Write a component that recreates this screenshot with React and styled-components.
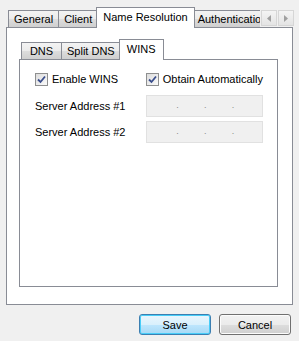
import React from "react";
import styled, { createGlobalStyle } from "styled-components";

const GlobalStyle = createGlobalStyle`
  html, body {
    margin: 0;
    padding: 0;
    background: #f0f0f0;
  }
  body {
    font-family: "Liberation Sans", Arial, sans-serif;
    font-size: 11px;
    color: #000;
  }
`;

const Dialog = styled.div`
  width: 299px;
  height: 341px;
  box-sizing: border-box;
  padding: 7px 6px 0 6px;
  display: flex;
  flex-direction: column;
`;

const TabHeader = styled.div`
  display: flex;
  align-items: flex-start;
  height: 21px;
  position: relative;
  z-index: 1;
`;

const TabStrip = styled.div`
  display: flex;
  align-items: flex-end;
  height: 21px;
  width: ${(p) => p.$width}px;
  overflow: hidden;
  padding-left: ${(p) => p.$inset}px;
  box-sizing: border-box;
  flex-shrink: 0;
`;

const Tab = styled.div`
  box-sizing: border-box;
  height: ${(p) => (p.$active ? 21 : 18)}px;
  min-width: ${(p) => (p.$min || 0) + (p.$active ? 4 : 0)}px;
  text-align: center;
  padding: ${(p) => (p.$active ? "2px 6px 0 6px" : "1px 5px 0 5px")};
  margin: ${(p) => (p.$active ? "0 -2px" : "0")};
  border: 1px solid #898c95;
  border-bottom: ${(p) => (p.$active ? "none" : "1px solid #898c95")};
  border-left: ${(p) => (p.$active || p.$first ? "1px solid #898c95" : "none")};
  background: ${(p) =>
    p.$active ? "#fff" : "linear-gradient(#f3f3f3 0%, #ebebeb 50%, #dddddd 51%, #cfcfcf 100%)"};
  position: relative;
  z-index: ${(p) => (p.$active ? 2 : 1)};
  white-space: nowrap;
  line-height: 15px;
  flex-shrink: 0;
`;

const Scroller = styled.div`
  display: flex;
  gap: 1px;
  margin-top: 3px;
  margin-left: 1px;
`;

const ScrollBtn = styled.div`
  width: 14px;
  height: 14px;
  border: 1px solid #d6d6d6;
  background: linear-gradient(#f4f4f4, #e4e4e4);
  display: flex;
  align-items: center;
  justify-content: center;
`;

const Panel = styled.div`
  box-sizing: border-box;
  border: 1px solid #898c95;
  background: #fff;
  margin-top: -1px;
  height: ${(p) => p.$height}px;
  width: ${(p) => p.$width}px;
  padding: ${(p) => p.$pad};
  display: flex;
  flex-direction: column;
`;

const Form = styled.div`
  display: grid;
  grid-template-columns: 111px 117px;
  grid-template-rows: 24px 22px 22px;
  row-gap: 4px;
  align-items: center;
  padding: 7px 0 0 15px;
`;

const CheckLabel = styled.label`
  display: flex;
  align-items: center;
  gap: 4px;
  white-space: nowrap;
`;

const Box = styled.span`
  width: 13px;
  height: 13px;
  box-sizing: border-box;
  border: 1px solid #8e8f8f;
  background: linear-gradient(135deg, #dcdcdc, #fbfbfb);
  display: inline-flex;
  align-items: center;
  justify-content: center;
`;

const FieldLabel = styled.span`
  white-space: nowrap;
`;

const IpBox = styled.div`
  box-sizing: border-box;
  width: 117px;
  height: 22px;
  border: 1px solid #e1e1e1;
  background: #f0f0f0;
  display: grid;
  grid-template-columns: repeat(4, 1fr);
  padding-left: 4px;
  color: #8a8a8a;
  font-size: 9px;
  line-height: 19px;
`;

const Dot = styled.span`
  text-align: right;
`;

const Buttons = styled.div`
  display: flex;
  justify-content: flex-end;
  gap: 8px;
  margin-top: 9px;
  padding-right: 2px;
`;

const Button = styled.button`
  font: inherit;
  width: 72px;
  height: 21px;
  border-radius: 3px;
  color: #000;
  padding: 0;
  border: 1px solid ${(p) => (p.$default ? "#3c7fb1" : "#707070")};
  background: ${(p) =>
    p.$default
      ? "linear-gradient(#eaf6fd 0%, #d9f0fc 50%, #bee6fd 51%, #a7d9f5 100%)"
      : "linear-gradient(#f2f2f2 0%, #ebebeb 50%, #dddddd 51%, #cfcfcf 100%)"};
  box-shadow: ${(p) => (p.$default ? "inset 0 0 0 1px #48cdf8" : "inset 0 0 0 1px #fcfcfc")};
`;

const Check = () => (
  <svg width="9" height="9" viewBox="0 0 9 9">
    <path d="M1 4.5 L3.5 7 L8 1.5" fill="none" stroke="#3a4e8c" strokeWidth="1.8" />
  </svg>
);

const Arrow = ({ dir }) => (
  <svg width="4" height="7" viewBox="0 0 4 7">
    <path d={dir === "left" ? "M4 0 L0 3.5 L4 7 Z" : "M0 0 L4 3.5 L0 7 Z"} fill="#a0a0a0" />
  </svg>
);

const IpField = () => (
  <IpBox>
    <Dot>.</Dot>
    <Dot>.</Dot>
    <Dot>.</Dot>
    <span />
  </IpBox>
);

export default function App() {
  return (
    <>
      <GlobalStyle />
      <Dialog>
        <TabHeader>
          <TabStrip $width={254} $inset={2}>
            <Tab $first>General</Tab>
            <Tab>Client</Tab>
            <Tab $active>Name Resolution</Tab>
            <Tab>Authentication</Tab>
          </TabStrip>
          <Scroller>
            <ScrollBtn>
              <Arrow dir="left" />
            </ScrollBtn>
            <ScrollBtn>
              <Arrow dir="right" />
            </ScrollBtn>
          </Scroller>
        </TabHeader>
        <Panel $height={278} $width={287} $pad="11px 0 0 12px">
          <TabHeader>
            <TabStrip $width={200} $inset={2}>
              <Tab $first $min={41}>DNS</Tab>
              <Tab $min={41}>Split DNS</Tab>
              <Tab $active $min={41}>WINS</Tab>
            </TabStrip>
          </TabHeader>
          <Panel $height={228} $width={259} $pad="0">
            <Form>
              <CheckLabel>
                <Box>
                  <Check />
                </Box>
                Enable WINS
              </CheckLabel>
              <CheckLabel>
                <Box>
                  <Check />
                </Box>
                Obtain Automatically
              </CheckLabel>
              <FieldLabel>Server Address #1</FieldLabel>
              <IpField />
              <FieldLabel>Server Address #2</FieldLabel>
              <IpField />
            </Form>
          </Panel>
        </Panel>
        <Buttons>
          <Button $default>Save</Button>
          <Button>Cancel</Button>
        </Buttons>
      </Dialog>
    </>
  );
}
